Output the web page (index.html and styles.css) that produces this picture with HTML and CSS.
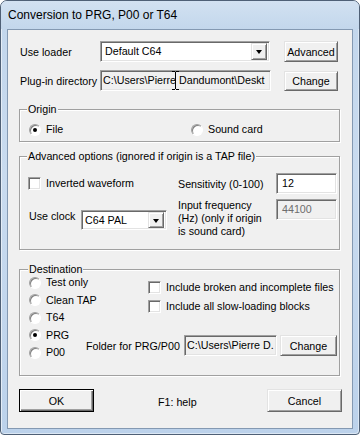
FILE: index.html
```html
<!DOCTYPE html>
<html lang="en">
<head>
    <meta charset="UTF-8">
    <title>Conversion to PRG, P00 or T64</title>
    <link rel="stylesheet" href="styles.css">
</head>
<body>
    <div class="window">
        <div class="titlebar">Conversion to PRG, P00 or T64</div>

        <div class="client">
            <div class="row row-loader">
                <span class="label">Use loader</span>
                <div class="combo combo-loader">
                    <span class="combo-text">Default C64</span>
                    <span class="combo-btn"><i class="arrow"></i></span>
                </div>
                <button class="btn btn-side">Advanced</button>
            </div>

            <div class="row row-plugin">
                <span class="label">Plug-in directory</span>
                <div class="field field-ro field-plugin">C:\Users\Pierre Dandumont\Deskt</div>
                <button class="btn btn-side btn-change">Change</button>
                <!-- mouse pointer sitting over the text -->
                <svg class="ibeam" width="7" height="19" viewBox="0 0 7 19" shape-rendering="crispEdges">
                    <path d="M0 0.5h3M4 0.5h3M3.5 1v17M0 18.5h3M4 18.5h3" stroke="#000" fill="none"/>
                </svg>
            </div>

            <div class="group group-origin">
                <span class="legend">Origin</span>
                <label class="opt opt-file"><span class="radio checked"></span>File</label>
                <label class="opt"><span class="radio"></span>Sound card</label>
            </div>

            <div class="group group-adv">
                <span class="legend">Advanced options (ignored if origin is a TAP file)</span>
                <div class="adv-row">
                    <label class="opt adv-left"><span class="check"></span>Inverted waveform</label>
                    <span class="adv-mid">Sensitivity (0-100)</span>
                    <div class="field field-num">12</div>
                </div>
                <div class="adv-row adv-row2">
                    <div class="adv-left clock">
                        <span class="clock-label">Use clock</span>
                        <div class="combo combo-clock">
                            <span class="combo-text">C64 PAL</span>
                            <span class="combo-btn"><i class="arrow"></i></span>
                        </div>
                    </div>
                    <span class="adv-mid freq">Input frequency<br>(Hz) (only if origin<br>is sound card)</span>
                    <div class="field field-num field-off">44100</div>
                </div>
            </div>

            <div class="group group-dest">
                <span class="legend">Destination</span>
                <div class="dest-body">
                    <div class="dest-radios">
                        <label class="opt"><span class="radio"></span>Test only</label>
                        <label class="opt"><span class="radio"></span>Clean TAP</label>
                        <label class="opt"><span class="radio"></span>T64</label>
                        <label class="opt"><span class="radio checked"></span>PRG</label>
                        <label class="opt"><span class="radio"></span>P00</label>
                    </div>
                    <div class="dest-right">
                        <label class="opt check-row"><span class="check"></span>Include broken and incomplete files</label>
                        <label class="opt check-row"><span class="check"></span>Include all slow-loading blocks</label>
                        <div class="folder-row">
                            <span class="folder-label">Folder for PRG/P00</span>
                            <div class="field field-ro field-folder">C:\Users\Pierre D.</div>
                            <button class="btn btn-folder">Change</button>
                        </div>
                    </div>
                </div>
            </div>

            <div class="bottom">
                <button class="btn btn-wide btn-default">OK</button>
                <span class="help">F1: help</span>
                <button class="btn btn-wide btn-cancel">Cancel</button>
            </div>
        </div>
    </div>
</body>
</html>
```

FILE: styles.css
```css
body {
    margin: 0;
    background: #fff;
    font-family: "Liberation Sans", Arial, sans-serif;
    font-size: 10.7px;
    color: #000;
}

.window {
    width: 360px;
    height: 435px;
    box-sizing: border-box;
    border: 1px solid #4f6076;
    border-radius: 7px 7px 4px 4px;
    background: linear-gradient(to bottom, #c2d6ec, #c9dbef 40%, #bcd2eb);
    box-shadow: inset 1px 1px #e4edf7, inset -1px -1px #dbe7f4;
    overflow: hidden;
}

.titlebar {
    height: 28px;
    line-height: 29px;
    padding-left: 7px;
    font-size: 12px;
    color: #000;
    background: linear-gradient(to bottom, #d2e1f1, #c3d7ec);
}

.client {
    margin: 0 6px;
    width: 346px;
    height: 400px;
    box-sizing: border-box;
    border: 1px solid #8499b2;
    background: #f0f0f0;
    padding-top: 11px;
}

/* top rows */
.row {
    display: flex;
    align-items: center;
    height: 21px;
    padding-left: 12px;
    position: relative;
}

.row-plugin {
    margin-top: 8px;
}

.label {
    width: 80px;
    flex: none;
}

/* sunken edit and combo boxes */
.field,
.combo {
    box-sizing: border-box;
    height: 21px;
    border: 1px solid;
    border-color: #a0a0a0 #fff #fff #a0a0a0;
    box-shadow: inset 1px 1px #696969, inset -1px -1px #e3e3e3;
    background: #fff;
    line-height: 19px;
    white-space: nowrap;
    overflow: hidden;
    flex: none;
}

.field {
    padding-left: 3px;
}

.field-ro {
    background: #f0f0f0;
}

.field-plugin {
    width: 171px;
    padding-left: 2px;
}

.field-num {
    width: 61px;
    padding-left: 5px;
}

.field-off {
    background: #f0f0f0;
    color: #6d6d6d;
}

.combo {
    display: flex;
    align-items: center;
    padding: 0 2px 0 4px;
}

.combo-text {
    flex: 1;
}

.combo-loader {
    width: 170px;
}

.combo-clock {
    width: 86px;
    height: 20px;
    padding-left: 3px;
}

.combo-btn {
    width: 16px;
    height: 17px;
    box-sizing: border-box;
    background: #f0f0f0;
    border: 1px solid;
    border-color: #e3e3e3 #696969 #696969 #e3e3e3;
    box-shadow: inset 1px 1px #fff, inset -1px -1px #a0a0a0;
    display: flex;
    align-items: center;
    justify-content: center;
}

.combo-clock .combo-btn {
    height: 16px;
}

.arrow {
    width: 0;
    height: 0;
    border-left: 3.5px solid transparent;
    border-right: 3.5px solid transparent;
    border-top: 4px solid #000;
    margin-top: 1px;
}

/* raised buttons */
.btn {
    font-family: "Liberation Sans", Arial, sans-serif;
    font-size: 10.7px;
    color: #000;
    background: #f0f0f0;
    box-sizing: border-box;
    border: 1px solid;
    border-color: #e3e3e3 #696969 #696969 #e3e3e3;
    box-shadow: inset 1px 1px #fff, inset -1px -1px #a0a0a0;
    padding: 0;
    border-radius: 0;
    flex: none;
}

.btn-side {
    width: 54px;
    height: 21px;
    margin-left: 14px;
}

.btn-change {
    height: 20px;
    margin-left: 13px;
}

.btn-default {
    border-color: #000;
    box-shadow: inset 1px 1px #fff, inset -1px -1px #696969, inset -2px -2px #a0a0a0;
}

.ibeam {
    position: absolute;
    left: 164px;
    top: 1px;
}

/* group boxes */
.group {
    position: relative;
    margin-left: 11px;
    width: 321px;
    box-sizing: border-box;
    border: 1px solid #a0a0a0;
    box-shadow: inset 1px 1px #fff, 1px 1px #fff;
}

.legend {
    position: absolute;
    top: -7px;
    left: 7px;
    padding: 0 1px;
    line-height: 13px;
    background: #f0f0f0;
    white-space: nowrap;
}

.group-origin {
    margin-top: 18px;
    height: 33px;
    display: flex;
    align-items: flex-start;
    padding: 13px 0 0 9px;
}

.group-dest .legend {
    left: 8px;
}

.opt {
    display: flex;
    align-items: center;
    height: 13px;
    line-height: 13px;
    white-space: nowrap;
}

.opt-file {
    width: 162px;
}

.radio {
    width: 12px;
    height: 12px;
    box-sizing: border-box;
    border-radius: 50%;
    border: 1px solid;
    border-color: #a0a0a0 #fff #fff #a0a0a0;
    box-shadow: inset 1px 1px #808080;
    background: #fff;
    margin-right: 5px;
    position: relative;
    flex: none;
}

.radio.checked::after {
    content: "";
    position: absolute;
    left: 3px;
    top: 3px;
    width: 4px;
    height: 4px;
    border-radius: 50%;
    background: #000;
}

.check {
    width: 13px;
    height: 13px;
    box-sizing: border-box;
    border: 1px solid;
    border-color: #a0a0a0 #fff #fff #a0a0a0;
    box-shadow: inset 1px 1px #696969, inset -1px -1px #e3e3e3;
    background: #fff;
    margin-right: 5px;
    flex: none;
}

/* advanced options */
.group-adv {
    margin-top: 14px;
    height: 94px;
    padding: 16px 0 0 8px;
}

.adv-row {
    display: flex;
    align-items: center;
    height: 21px;
}

.adv-row2 {
    margin-top: 5px;
    align-items: flex-start;
    height: auto;
}

.adv-left {
    width: 150px;
    flex: none;
}

.adv-mid {
    width: 98px;
    flex: none;
}

.clock {
    display: flex;
    align-items: flex-start;
    margin-top: 11px;
}

.clock-label {
    width: 53px;
    padding-left: 1px;
    box-sizing: border-box;
    line-height: 13px;
}

.freq {
    line-height: 13px;
}

/* destination */
.group-dest {
    margin-top: 19px;
    height: 107px;
    padding-left: 9px;
}

.dest-body {
    display: flex;
}

.dest-radios {
    width: 57px;
    flex: none;
    padding-top: 4px;
}

.dest-radios .opt {
    height: 17.5px;
}

.dest-right {
    display: flex;
    flex-direction: column;
    padding-top: 7.5px;
}

.check-row {
    height: 19px;
    padding-left: 62px;
}

.folder-row {
    display: flex;
    align-items: center;
    margin-top: 19.5px;
    height: 21px;
}

.folder-label {
    width: 98px;
    flex: none;
}

.field-folder {
    width: 93px;
    padding-left: 2px;
}

.btn-folder {
    width: 57px;
    height: 21px;
    margin-left: 3px;
}

/* bottom buttons */
.bottom {
    display: flex;
    align-items: center;
    margin-top: 13px;
    padding-left: 11px;
}

.btn-wide {
    width: 75px;
    height: 23px;
}

.help {
    margin-left: 64px;
    margin-top: 3px;
}

.btn-cancel {
    margin-left: auto;
    margin-right: 10px;
}
```
